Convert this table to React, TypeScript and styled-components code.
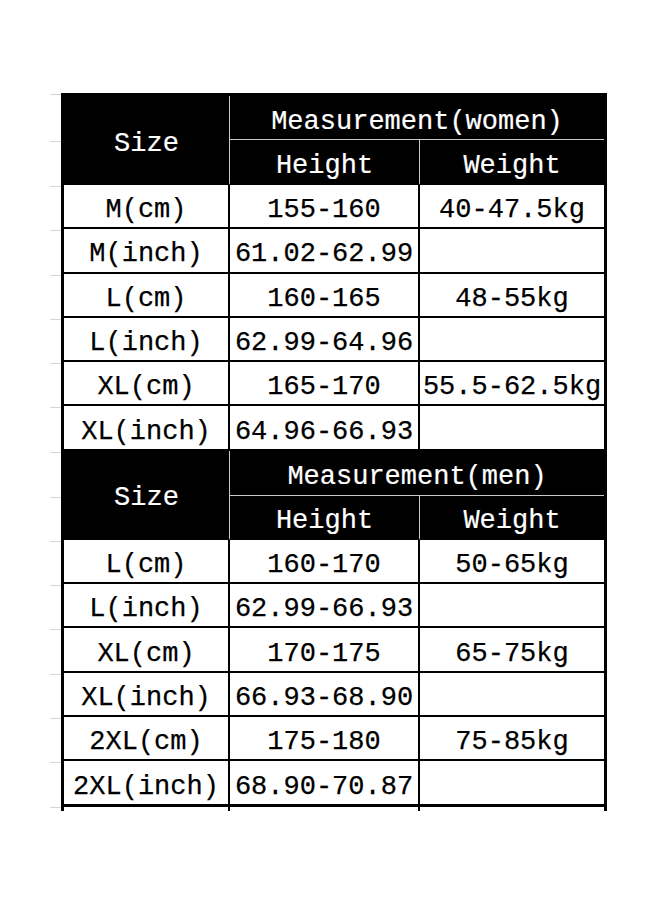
import React from 'react';
import styled, { createGlobalStyle } from 'styled-components';

const GlobalStyle = createGlobalStyle`
	html, body {
		margin: 0;
		padding: 0;
		background: #fff;
	}
`;

const Page = styled.div`
	width: 660px;
	height: 900px;
	padding: 93px 0 0 50px;
	box-sizing: border-box;
	display: flex;
	align-items: flex-start;
	font-family: 'Liberation Mono', 'DejaVu Sans Mono', monospace;
`;

const Gutter = styled.div`
	width: 11px;
	display: flex;
	flex-direction: column;
	border-top: 1px solid #d4d4d4;
	margin-top: 1px;
`;

const Tick = styled.div<{ $h: number }>`
	height: ${(p) => p.$h - 1}px;
	flex: none;
	border-bottom: 1px solid #d4d4d4;
`;

const Sheet = styled.div`
	display: flex;
	flex-direction: column;
`;

const Table = styled.table`
	width: 546px;
	table-layout: fixed;
	border-collapse: separate;
	border-spacing: 0;
	border: 3px solid #000;
`;

const Row = styled.tr<{ $h: number }>`
	height: ${(p) => p.$h}px;
`;

const HeadCell = styled.th<{ $last?: boolean; $bottom?: boolean }>`
	background: #000;
	color: #fff;
	font-weight: 400;
	font-size: 27px;
	-webkit-text-stroke: 0.2px #fff;
	padding: 8px 0 0;
	text-align: center;
	vertical-align: middle;
	white-space: nowrap;
	border-right: ${(p) => (p.$last ? 'none' : '1px solid #c9c9c9')};
	border-bottom: ${(p) => (p.$bottom ? '2px solid #000' : '1px solid #c9c9c9')};
`;

const Cell = styled.td<{ $last?: boolean; $bottom?: boolean }>`
	color: #000;
	font-size: 27px;
	-webkit-text-stroke: 0.25px #000;
	padding: 8px 0 0;
	text-align: center;
	vertical-align: middle;
	white-space: nowrap;
	border-right: ${(p) => (p.$last ? 'none' : '2px solid #000')};
	border-bottom: ${(p) => (p.$bottom ? 'none' : '2px solid #000')};
`;

const Stub = styled.div`
	display: grid;
	grid-template-columns: 167px 190px 189px;
	height: 4px;
`;

const StubCol = styled.div<{ $first?: boolean }>`
	border-left: ${(p) => (p.$first ? '3px' : '2px')} solid #000;
	&:last-child {
		border-right: 3px solid #000;
	}
`;

type Entry = { size: string; height: string; weight: string };

const WOMEN: Entry[] = [
	{ size: 'M(cm)', height: '155-160', weight: '40-47.5kg' },
	{ size: 'M(inch)', height: '61.02-62.99', weight: '' },
	{ size: 'L(cm)', height: '160-165', weight: '48-55kg' },
	{ size: 'L(inch)', height: '62.99-64.96', weight: '' },
	{ size: 'XL(cm)', height: '165-170', weight: '55.5-62.5kg' },
	{ size: 'XL(inch)', height: '64.96-66.93', weight: '' }
];

const MEN: Entry[] = [
	{ size: 'L(cm)', height: '160-170', weight: '50-65kg' },
	{ size: 'L(inch)', height: '62.99-66.93', weight: '' },
	{ size: 'XL(cm)', height: '170-175', weight: '65-75kg' },
	{ size: 'XL(inch)', height: '66.93-68.90', weight: '' },
	{ size: '2XL(cm)', height: '175-180', weight: '75-85kg' },
	{ size: '2XL(inch)', height: '68.90-70.87', weight: '' }
];

const BODY_ROW = 44.3;
const TICKS = [
	47, 45, ...Array(6).fill(BODY_ROW), 45, 44, ...Array(6).fill(BODY_ROW)
] as number[];

const Section: React.FC<{ label: string; rows: Entry[]; lastSection: boolean }> = ({
	label,
	rows,
	lastSection
}) => (
	<>
		<Row $h={lastSection ? 45 : 44}>
			<HeadCell rowSpan={2} $bottom>
				Size
			</HeadCell>
			<HeadCell colSpan={2} $last>
				{label}
			</HeadCell>
		</Row>
		<Row $h={lastSection ? 44 : 45}>
			<HeadCell $bottom>Height</HeadCell>
			<HeadCell $bottom $last>
				Weight
			</HeadCell>
		</Row>
		{rows.map((r, i) => {
			const bottom = lastSection && i === rows.length - 1;
			return (
				<Row key={r.size} $h={bottom ? 43 : BODY_ROW}>
					<Cell $bottom={bottom}>{r.size}</Cell>
					<Cell $bottom={bottom}>{r.height}</Cell>
					<Cell $bottom={bottom} $last>
						{r.weight}
					</Cell>
				</Row>
			);
		})}
	</>
);

const App: React.FC = () => (
	<>
		<GlobalStyle />
		<Page>
			<Gutter>
				{TICKS.map((h, i) => (
					<Tick key={i} $h={h} />
				))}
			</Gutter>
			<Sheet>
				<Table>
					<colgroup>
						<col style={{ width: 166 }} />
						<col style={{ width: 190 }} />
						<col style={{ width: 184 }} />
					</colgroup>
					<tbody>
						<Section label="Measurement(women)" rows={WOMEN} lastSection={false} />
						<Section label="Measurement(men)" rows={MEN} lastSection />
					</tbody>
				</Table>
				<Stub>
					<StubCol $first />
					<StubCol />
					<StubCol />
				</Stub>
			</Sheet>
		</Page>
	</>
);

export default App;
